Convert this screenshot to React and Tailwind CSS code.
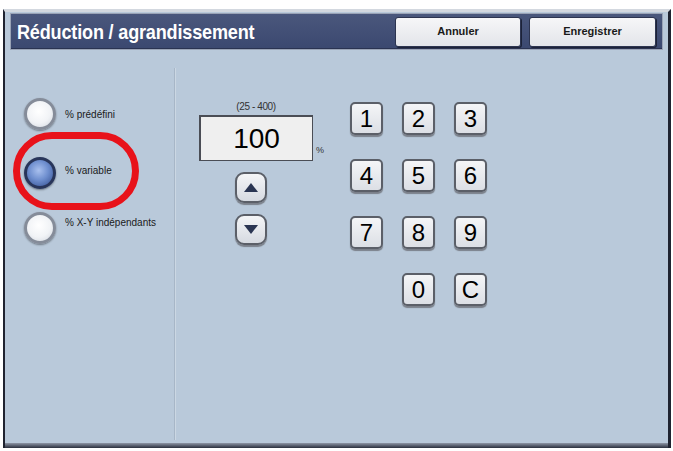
import React from 'react';

const Radio = ({ label, selected, labelClass = '' }) => (
  <div className="flex items-center">
    <div
      className={
        selected
          ? 'w-[32px] h-[32px] rounded-full border-[3px] border-[#28355a] bg-[radial-gradient(circle_at_45%_40%,#a9c0ee_0%,#6f8fcf_45%,#3b5798_90%)] shadow-[0_1px_2px_rgba(0,0,0,0.4)]'
          : 'w-[32px] h-[32px] rounded-full border-[3px] border-[#858c99] bg-[radial-gradient(circle_at_45%_40%,#ffffff_0%,#f1f3f6_55%,#d3d8e0_95%)] shadow-[0_1px_2px_rgba(0,0,0,0.4)]'
      }
    />
    <span className={'ml-[9px] text-[10px] text-[#1a1a1a] ' + labelClass}>{label}</span>
  </div>
);

const Key = ({ children }) => (
  <div className="w-[33px] h-[33px] rounded-[5px] border-2 border-[#5b5f68] bg-[linear-gradient(#f4f5f7,#dcdfe5)] shadow-[0_2px_1px_#7b808a] flex items-center justify-center text-[24px] leading-none text-black">
    {children}
  </div>
);

const Arrow = ({ up }) => (
  <div className="w-[32px] h-[31px] rounded-[9px] border-2 border-[#5b5f68] bg-[linear-gradient(#f4f5f7,#d6dae1)] shadow-[0_2px_1px_#7b808a] flex items-center justify-center">
    <svg width="14" height="9" viewBox="0 0 14 9">
      {up ? (
        <path d="M7 0 L14 9 L0 9 Z" fill="#2a3552" />
      ) : (
        <path d="M0 0 L14 0 L7 9 Z" fill="#2a3552" />
      )}
    </svg>
  </div>
);

export default function App() {
  return (
    <div className="w-[673px] h-[451px] bg-white overflow-hidden font-['Liberation_Sans',Arial,sans-serif]">
      <div className="ml-[3px] mt-[9px] w-[668px] h-[439px] flex flex-col bg-[#b9c9da] border-l-2 border-r-[3px] border-t-[3px] border-l-[#1f2330] border-r-[#1f2330] border-t-[#d3d8df]">
        <div className="mx-[5px] mt-[1px] h-[37px] flex items-center bg-[linear-gradient(#4a577c,#3b4870)] border border-[#9aa3b6] shadow-[inset_0_-1px_0_#2a3352]">
          <span className="inline-block ml-[6px] origin-left scale-x-[0.86] text-white font-bold text-[21px] tracking-[-0.2px]">
            Réduction / agrandissement
          </span>
          <div className="ml-auto mr-[6px] flex gap-[8px]">
            <button className="w-[126px] h-[30px] rounded-[3px] bg-[linear-gradient(#f6f6f8,#e3e5ea)] border border-[#2c3450] shadow-[1px_1px_0_#1c2238] text-[11px] font-bold text-[#1a1a1a]">
              Annuler
            </button>
            <button className="w-[127px] h-[30px] rounded-[3px] bg-[linear-gradient(#f6f6f8,#e3e5ea)] border border-[#2c3450] shadow-[1px_1px_0_#1c2238] text-[11px] font-bold text-[#1a1a1a]">
              Enregistrer
            </button>
          </div>
        </div>

        <div className="flex-1 flex">
          <div className="relative w-[169px] pl-[19px] pt-[48px] flex flex-col">
            <Radio label="% prédéfini" />
            <div className="mt-[27px]">
              <Radio label="% variable" selected labelClass="-mt-[5px]" />
            </div>
            <div className="mt-[23px]">
              <Radio label="% X-Y indépendants" labelClass="-mt-[11px]" />
            </div>
            <div className="absolute left-[8px] top-[82px] w-[126px] h-[78px] rounded-[40px] border-[7px] border-[#e8121a]" />
          </div>

          <div className="w-[2px] mt-[18px] mb-[3px] bg-[#a7b6c7] border-r border-r-[#cbd7e3]" />

          <div className="flex pl-[23px] pt-[52px]">
            <div className="relative w-[114px] flex flex-col items-center">
              <div className="h-[13px] text-[10px] leading-[10px] text-[#333] tracking-[-0.4px]">(25 - 400)</div>
              <div className="w-[114px] h-[46px] bg-[#efefef] border border-[#4a4d55] border-t-2 border-l-2 flex items-center justify-center text-[28px] text-black">
                100
              </div>
              <span className="absolute left-[117px] top-[42px] text-[9px] text-[#333]">%</span>
              <div className="mt-[11px] -ml-[10px]">
                <Arrow up />
              </div>
              <div className="mt-[11px] -ml-[10px]">
                <Arrow />
              </div>
            </div>

            <div className="ml-[37px] grid grid-cols-[33px_33px_33px] gap-x-[19px] gap-y-[24px] h-fit">
              <Key>1</Key>
              <Key>2</Key>
              <Key>3</Key>
              <Key>4</Key>
              <Key>5</Key>
              <Key>6</Key>
              <Key>7</Key>
              <Key>8</Key>
              <Key>9</Key>
              <div />
              <Key>0</Key>
              <Key>C</Key>
            </div>
          </div>
        </div>

        <div className="h-[5px] bg-[linear-gradient(#8e96a6,#2a2f3d)]" />
      </div>
    </div>
  );
}
